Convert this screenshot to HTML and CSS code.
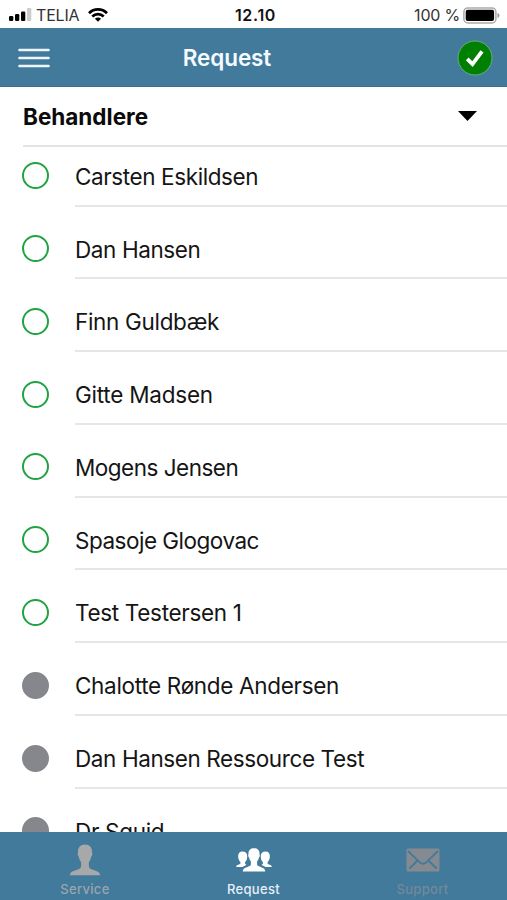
FILE: index.html
```html
<!DOCTYPE html>
<html lang="da">
<head>
<meta charset="utf-8">
<title>Request</title>
<link rel="stylesheet" href="styles.css">
</head>
<body>
<div class="app">
  <div class="status">
    <div class="carrier">
      <svg class="signal" width="23" height="14" viewBox="0 0 23 14"><rect x="0" y="8" width="4.3" height="5" rx="1.2"/><rect x="6" y="6" width="4.3" height="7" rx="1.2"/><rect x="12" y="3.5" width="4.3" height="9.5" rx="1.2"/><rect x="18" y="0" width="4.3" height="13" rx="1.2" fill="#ccc"/></svg>
      <span class="telia">TELIA</span>
      <svg width="20" height="14" viewBox="0 0 20 14" fill="none" stroke="#000" stroke-width="2.7"><path d="M1 5.2C6 .2 14 .2 19 5.2M4.3 8.5c3.2-3.2 8.2-3.2 11.4 0"/><path d="M6.9 10.7c1.8-1.7 4.4-1.7 6.2 0L10 13.8z" fill="#000" stroke="none"/></svg>
    </div>
    <span class="clock">12.10</span>
    <div class="power">
      <span>100 %</span>
      <svg width="37" height="17" viewBox="0 0 37 17"><rect x=".9" y=".9" width="32" height="15" rx="4" fill="#fff" stroke="#aaa" stroke-width="1.5"/><rect x="2.7" y="2.7" width="28.4" height="11.4" rx="2" /><path d="M34.5 5.8q2 1 2 2.7t-2 2.7z" fill="#999"/></svg>
    </div>
  </div>
  <header class="bar">
    <svg class="menu" width="32" height="20" viewBox="0 0 32 20"><path d="M1.500 2h29M1.500 10h29M1.500 18h29" stroke="#edf5fb" stroke-width="2.7" stroke-linecap="round"/></svg>
    <h1>Request</h1>
    <svg class="ok" width="36" height="36" viewBox="0 0 36 36"><circle cx="18" cy="18" r="17" fill="#008000" stroke="#69ad80" stroke-width="1"/><path d="M10.200 18.800l5.300 5.300L25 11.300" fill="none" stroke="#fff" stroke-width="3.8"/></svg>
  </header>
  <main>
    <div class="group"><h2>Behandlere</h2><svg width="19" height="10" viewBox="0 0 19 10"><path d="M0 0h19L9.500 10z"/></svg></div>
    <ul>
      <li><i class="dot"></i><span class="tight">Carsten Eskildsen</span></li>
      <li><i class="dot"></i><span class="tight">Dan Hansen</span></li>
      <li><i class="dot"></i><span>Finn Guldbæk</span></li>
      <li><i class="dot"></i><span class="loose">Gitte Madsen</span></li>
      <li><i class="dot"></i><span class="tighter">Mogens Jensen</span></li>
      <li><i class="dot"></i><span class="tighter">Spasoje Glogovac</span></li>
      <li><i class="dot"></i><span>Test Testersen 1</span></li>
      <li><i class="dot busy"></i><span>Chalotte Rønde Andersen</span></li>
      <li><i class="dot busy"></i><span class="tight">Dan Hansen Ressource Test</span></li>
      <li><i class="dot busy"></i><span>Dr Squid</span></li>
    </ul>
  </main>
  <nav>
    <a class="service"><svg width="32" height="32" viewBox="0 0 32 32" fill="#a7a8aa"><path d="M16 .5c-4.600 0-7.200 3-7 7.700-.8.900-.3 3.500.7 4.300.4 2.400 1.300 4.200 2.400 5.500v4.200c0 2-1.500 2.700-4.600 3.700C3.200 27.300 1 28.300.8 31.300h30.400c-.2-3-2.400-4-6.700-5.400-3.100-1-4.600-1.700-4.600-3.700V18c1.100-1.300 2-3.100 2.400-5.500 1-.8 1.500-3.400.7-4.300.2-4.700-2.400-7.700-7-7.700z"/></svg><span>Service</span></a>
    <a class="request"><svg width="36" height="24" viewBox="0 0 36 24" fill="#fff"><path d="M6.500 3.500c-3.200 0-4.600 2.200-4.300 5.200.1 2.300.9 4.200 2.200 5.300v1.600C3.900 16.800.4 16.500.2 19h6.300c1-1 2.300-1.500 4-2.100-1-.5-1.600-1.200-1.500-2.600 1.800-1.200 2.300-4.200 2.200-6.200-.1-3-1.600-4.600-4.700-4.600zM29.500 3.500c3.200 0 4.600 2.200 4.300 5.200-.1 2.300-.9 4.200-2.200 5.300v1.600c.5 1.200 4 .9 4.200 3.400h-6.300c-1-1-2.300-1.500-4-2.100 1-.5 1.600-1.200 1.500-2.600-1.800-1.200-2.300-4.200-2.200-6.200.1-3 1.600-4.600 4.700-4.600z"/><path d="M18 .2c-3.900 0-5.800 2.300-5.500 6-.7.800-.2 2.800.6 3.400.3 1.700.9 2.900 1.800 3.900v2.800c0 1.400-1.200 1.900-3.400 2.600-3 .9-4.600 1.700-4.700 4.600h22.400c-.1-2.900-1.700-3.700-4.700-4.600-2.200-.7-3.400-1.200-3.400-2.600v-2.800c.9-1 1.500-2.200 1.800-3.900.8-.6 1.300-2.600.6-3.400.3-3.700-1.600-6-5.500-6z"/></svg><span>Request</span></a>
    <a class="support"><svg width="34" height="24" viewBox="0 0 34 24"><rect x=".5" y=".5" width="33" height="23" rx="1.500" fill="#858a91"/><path d="M2 3l11.500 11.200c2.300 2 4.700 2 7 0L32 3M3.500 20.500l8-8M30.500 20.500l-8-8" fill="none" stroke="#417a9b" stroke-width="1.800"/></svg><span>Support</span></a>
  </nav>
</div>
</body>
</html>
```

FILE: styles.css
```css
* { box-sizing: border-box; }
body { margin: 0; background: #fff; color: #151515; font-family: Inter, "Liberation Sans", sans-serif; }
h1, h2, ul { margin: 0; padding: 0; }
svg { display: block; flex: none; }
.app { width: 507px; height: 900px; display: flex; flex-direction: column; overflow: hidden; }
.status { height: 28px; flex: none; display: grid; grid-template-columns: 1fr auto 1fr; align-items: center; padding: 2px 7px 0 9px; font-size: 16px; color: #333; }
.carrier, .power { display: flex; align-items: center; }
.signal { margin-right: 4px; }
.telia { width: 52px; letter-spacing: -.2px; }
.clock { font-weight: 600; color: #111; letter-spacing: .7px; margin-left: 2px; }
.power { justify-content: flex-end; gap: 3px; letter-spacing: -.2px; }
.bar { height: 59px; flex: none; background: #417a9b; border-bottom: 1px solid #356f91; display: grid; grid-template-columns: 1fr auto 1fr; align-items: center; padding: 1px 14px 0 18px; }
.bar h1 { font-size: 22.500px; line-height: 28px; font-weight: 600; color: #f5faff; margin-right: 57px; letter-spacing: -.1px; }
.ok { justify-self: end; }
main { flex: 1; min-height: 0; overflow: hidden; }
.group { height: 60px; margin-left: 23px; padding: 0 30px 0 0; border-bottom: 2px solid #e4e4e4; display: flex; align-items: center; justify-content: space-between; }
.group h2 { font-size: 22.500px; line-height: 28px; font-weight: 700; color: #0b0b0b; letter-spacing: 0; padding-top: 1px; }
ul { list-style: none; }
li { height: 72.8px; display: flex; padding-left: 22px; }
li:first-child { margin-top: -13.300px; }
.dot { width: 27px; height: 27px; margin: 28.600px 26px 0 0; flex: none; border: 2px solid #20a342; border-radius: 50%; }
.busy { border-color: #85878c; background: #85878c; }
li span { flex: 1; padding-top: 29px; border-bottom: 2px solid #e6e6e6; font-size: 22.500px; line-height: 28px; letter-spacing: -.32px; white-space: nowrap; }
li .loose { letter-spacing: -.23px; }
li .tight { letter-spacing: -.4px; }
li .tighter { letter-spacing: -.5px; }
nav { height: 68px; flex: none; background: #417a9b; display: grid; grid-template-columns: repeat(3, 1fr); }
nav a { display: flex; flex-direction: column; align-items: center; justify-content: flex-end; padding-bottom: 3px; font-size: 13px; line-height: 16px; font-weight: 500; letter-spacing: .3px; }
nav svg { margin-bottom: 5px; }
.service { color: #9aa5ad; padding-left: 1px; }
.request { color: #e4f0fa; }
.support { color: #72899a; }
.request svg, .support svg { margin-bottom: 9px; }
```
